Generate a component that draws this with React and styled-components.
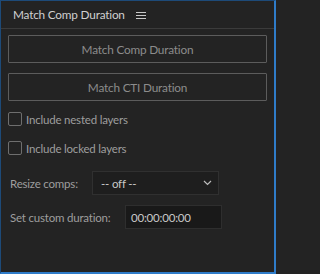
import React from "react";
import styled, { createGlobalStyle } from "styled-components";

const Global = createGlobalStyle`
  html, body {
    margin: 0;
    padding: 0;
    background: #232323;
  }
  * {
    box-sizing: border-box;
  }
`;

const Panel = styled.div`
  width: 276px;
  height: 274px;
  background: #232323;
  border-left: 1px solid #1d4a78;
  border-top: 1px solid #1d4a78;
  border-right: 2px solid #2f7cc9;
  border-bottom: 2px solid #2f7cc9;
  font-family: Lato, "Open Sans", sans-serif;
  font-size: 11.5px;
  letter-spacing: -0.2px;
  display: flex;
  flex-direction: column;
`;

const Header = styled.div`
  height: 28px;
  flex-shrink: 0;
  display: flex;
  align-items: center;
  gap: 11px;
  padding-left: 12px;
  border-bottom: 1px solid #3b3b3b;
  color: #d0d0d0;
  font-size: 11.8px;
`;

const Menu = styled.div`
  width: 10px;
  display: flex;
  flex-direction: column;
  gap: 2px;
  margin-top: 1px;
  span {
    height: 1px;
    background: #c8c8c8;
  }
`;

const Body = styled.div`
  padding: 6px 7px 0 7px;
  display: flex;
  flex-direction: column;
`;

const Button = styled.button`
  height: 28px;
  width: 100%;
  background: #232323;
  border: 1px solid #5c5c5c;
  border-radius: 1px;
  color: #8c8c8c;
  font-family: inherit;
  font-size: 11.8px;
  letter-spacing: inherit;
  margin-bottom: ${(p) => p.$mb}px;
`;

const CheckRow = styled.label`
  display: flex;
  align-items: center;
  gap: 4px;
  height: 14px;
  color: #9e9e9e;
  margin-bottom: ${(p) => p.$mb}px;
`;

const Box = styled.span`
  width: 14px;
  height: 14px;
  border: 1.5px solid #6e6e6e;
  border-radius: 2px;
  flex-shrink: 0;
`;

const FieldRow = styled.div`
  display: flex;
  align-items: center;
  color: #9e9e9e;
  padding-left: 2px;
  margin-bottom: ${(p) => p.$mb}px;
`;

const Label = styled.span`
  width: ${(p) => p.$w}px;
`;

const Select = styled.div`
  width: 127px;
  height: 24px;
  background: #1e1e1e;
  border: 1px solid #303030;
  display: flex;
  align-items: center;
  justify-content: space-between;
  padding: 0 6px 0 8px;
  color: #c8c8c8;
`;

const Input = styled.div`
  width: 97px;
  height: 24px;
  background: #191919;
  border: 1px solid #2e2e2e;
  display: flex;
  align-items: center;
  padding-left: 5px;
  color: #c8c8c8;
`;

export default function App() {
  return (
    <>
      <Global />
      <Panel>
        <Header>
          Match Comp Duration
          <Menu>
            <span />
            <span />
            <span />
          </Menu>
        </Header>
        <Body>
          <Button $mb={10}>Match Comp Duration</Button>
          <Button $mb={11}>Match CTI Duration</Button>
          <CheckRow $mb={15}>
            <Box />
            Include nested layers
          </CheckRow>
          <CheckRow $mb={16}>
            <Box />
            Include locked layers
          </CheckRow>
          <FieldRow $mb={10}>
            <Label $w={82}>Resize comps:</Label>
            <Select>
              -- off --
              <svg width="9" height="6" viewBox="0 0 9 6">
                <path d="M1 1 L4.5 4.5 L8 1" fill="none" stroke="#bdbdbd" strokeWidth="1.2" />
              </svg>
            </Select>
          </FieldRow>
          <FieldRow>
            <Label $w={115}>Set custom duration:</Label>
            <Input>00:00:00:00</Input>
          </FieldRow>
        </Body>
      </Panel>
    </>
  );
}
